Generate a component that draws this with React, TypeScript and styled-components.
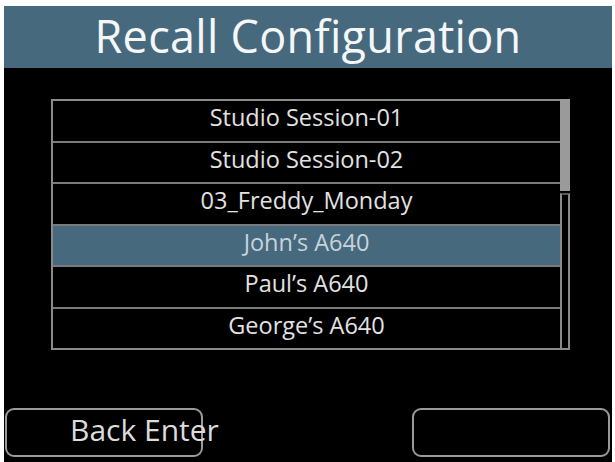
import React from 'react'
import styled, { createGlobalStyle } from 'styled-components'

const GlobalStyle = createGlobalStyle`
  html, body {
    margin: 0;
    padding: 0;
    background: #ffffff;
  }
  body {
    font-family: "Open Sans", "Noto Sans", sans-serif;
  }
`

const Screen = styled.div`
  margin: 6px 3px 0 4px;
  height: 456px;
  background: #000;
  display: flex;
  flex-direction: column;
`

const TitleBar = styled.div`
  height: 62px;
  box-sizing: border-box;
  padding-bottom: 4px;
  background: #46697e;
  display: flex;
  align-items: center;
  justify-content: center;
  color: #f4f6f7;
  font-size: 45px;
  letter-spacing: 0.3px;
`

const ListFrame = styled.div`
  margin: 31px 0 0 47px;
  width: 519px;
  height: 251px;
  display: flex;
`

const List = styled.div`
  flex: 1;
  border: 2px solid #8a8a8a;
  border-right: none;
  display: flex;
  flex-direction: column;
`

const Row = styled.div<{ $selected?: boolean }>`
  flex: 1;
  display: flex;
  align-items: center;
  justify-content: center;
  padding-bottom: 6px;
  font-size: 23.5px;
  line-height: 1;
  color: ${p => (p.$selected ? '#c9d3da' : '#e2e2e2')};
  background: ${p => (p.$selected ? '#46697e' : '#000')};
  border-top: 2px solid #7a7a7a;

  &:first-child {
    border-top: none;
  }
`

const ScrollTrack = styled.div`
  width: 10px;
  display: flex;
  flex-direction: column;
`

const ScrollThumb = styled.div`
  height: 92px;
  background: #9a9a9a;
`

const ScrollRail = styled.div`
  flex: 1;
  margin-top: 2px;
  border: 2px solid #8a8a8a;
  border-top-color: #555;
`

const Footer = styled.div`
  margin-top: auto;
  padding: 0 2px 5px 1px;
  display: flex;
  justify-content: space-between;
`

const SoftKey = styled.div`
  width: 198px;
  height: 49px;
  box-sizing: border-box;
  border: 2px solid #9a9a9a;
  border-radius: 9px;
  display: flex;
  align-items: center;
  padding: 0 0 6px 63px;
  color: #dcdcdc;
  font-size: 30px;
  line-height: 1;
  white-space: nowrap;
`

const configs = [
  'Studio Session-01',
  'Studio Session-02',
  '03_Freddy_Monday',
  'John\u2019s A640',
  'Paul\u2019s A640',
  'George\u2019s A640',
]

export default function App() {
  return (
    <>
      <GlobalStyle />
      <Screen>
        <TitleBar>Recall Configuration</TitleBar>
        <ListFrame>
          <List>
            {configs.map((name, i) => (
              <Row key={name} $selected={i === 3}>
                {name}
              </Row>
            ))}
          </List>
          <ScrollTrack>
            <ScrollThumb />
            <ScrollRail />
          </ScrollTrack>
        </ListFrame>
        <Footer>
          <SoftKey>Back Enter</SoftKey>
          <SoftKey />
        </Footer>
      </Screen>
    </>
  )
}
